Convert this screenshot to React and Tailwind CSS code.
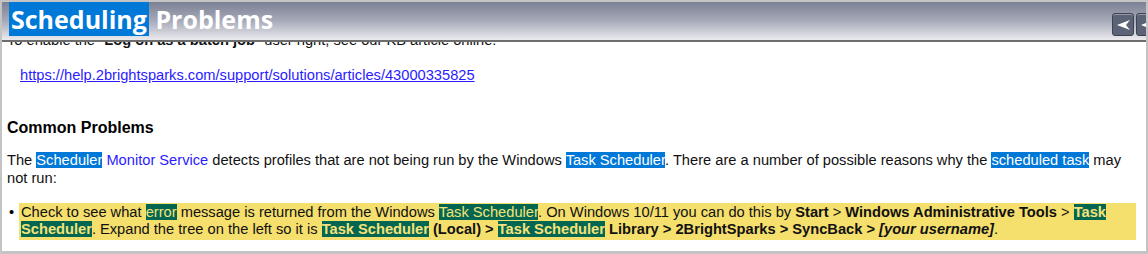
import React from 'react';

const Blue = ({ children }) => <span className="bg-[#0078d7] text-white">{children}</span>;
const Green = ({ children, bold }) => (
  <span className={`bg-[#036650] text-[#f5e27a] ${bold ? 'font-bold' : ''}`}>{children}</span>
);

const NavButton = () => (
  <div className="w-[22px] h-[23px] rounded-[3px] bg-[#5d6376] border border-[#3e4352] flex items-center justify-center shadow-[inset_0_1px_0_rgba(255,255,255,0.35)]">
    <svg width="15" height="12" viewBox="0 0 15 12">
      <path d="M1 6 L14 1 L10 6 L14 11 Z" fill="#ffffff" />
    </svg>
  </div>
);

export default function App() {
  return (
    <div className="w-[1148px] h-[254px] bg-[#c4c4c4] pl-[2px] pr-[2px] pt-[2px] pb-[3px] overflow-hidden font-['Liberation_Sans',Arial,sans-serif]">
      <div className="h-full bg-white flex flex-col overflow-hidden">
        {/* header bar */}
        <div className="h-[40px] shrink-0 bg-gradient-to-b from-[#7b8094] via-[#a7abb9] to-[#ececef] border-b-2 border-[#6d6d6d] flex items-center justify-between pl-[7px] relative z-10">
          <h1 className="font-['Open_Sans',sans-serif] font-bold text-[25px] leading-[29px] text-white mt-[-3px]">
            <span className="bg-[#0078d7] px-[2px]">Scheduling</span> Problems
          </h1>
          <div className="flex gap-[2px] mr-[-12px] mt-[7px]">
            <NavButton />
            <NavButton />
          </div>
        </div>

        {/* scrolled body */}
        <div className="flex-1 overflow-hidden pl-[5px] pr-[10px] text-[14.67px] leading-[18px] text-[#111]">
          <p className="mt-[-11px]">
            To enable the "<b>Log on as a batch job</b>" user right, see our KB article online:
          </p>
          <p className="mt-[17px] pl-[13px]">
            <a className="text-[#2b1cff] underline" href="#">https://help.2brightsparks.com/support/solutions/articles/43000335825</a>
          </p>
          <h2 className="mt-[34px] font-bold text-[16px] leading-[20px] text-black">Common Problems</h2>
          <p className="mt-[13px] w-[1125px]">
            The <Blue>Scheduler</Blue> <span className="text-[#2b1cff]">Monitor Service</span> detects profiles that are not being run by the Windows <Blue>Task Scheduler</Blue>. There are a number of possible reasons why the <Blue>scheduled task</Blue> may not run:
          </p>
          <ul className="mt-[16px] flex">
            <li className="flex w-full">
              <span className="w-[12px] shrink-0 pl-[2px] text-black">•</span>
              <div className="w-[1118px] bg-[#f5df6d] px-[2px] pt-[1px] pb-[2px] leading-[17px]">
                Check to see what <Green>error</Green> message is returned from the Windows <Green>Task Scheduler</Green>. On Windows 10/11 you can do this by <b>Start</b> &gt; <b>Windows Administrative Tools</b> &gt; <Green bold>Task Scheduler</Green>. Expand the tree on the left so it is <Green bold>Task Scheduler</Green> <b>(Local) &gt;</b> <Green bold>Task Scheduler</Green> <b>Library &gt; 2BrightSparks &gt; SyncBack &gt; <i>[your username]</i></b>.
              </div>
            </li>
          </ul>
        </div>
      </div>
    </div>
  );
}
